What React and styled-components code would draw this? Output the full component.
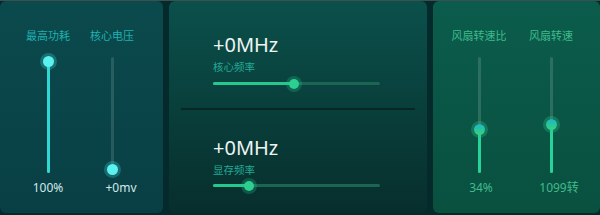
import React from 'react'
import styled, { createGlobalStyle } from 'styled-components'

const GlobalStyle = createGlobalStyle`
  html, body {
    margin: 0;
    padding: 0;
    background: #052a2c;
  }
  body {
    font-family: "Noto Sans", "Noto Sans CJK SC", sans-serif;
  }
`

// THEME PER PANEL
const themes = {
  power: {
    bg: 'linear-gradient(180deg, #0b4a4c 0%, #083f45 100%)',
    label: '#1fb0b2',
    value: '#d2e8e8',
    track: 'rgba(255,255,255,0.13)',
    fill: '#2fd8d2',
    thumb: '#5af2ee',
    halo: 'rgba(60, 220, 220, 0.28)',
  },
  fan: {
    bg: 'linear-gradient(180deg, #0b5c4c 0%, #09503f 100%)',
    label: '#3fbb8c',
    value: '#3fbb8c',
    track: 'rgba(255,255,255,0.14)',
    fill: '#28d39a',
    thumb: 'linear-gradient(180deg, #1fb4c4 0%, #34d47e 100%)',
    halo: 'rgba(50, 200, 140, 0.3)',
  },
}

const VerticalSlider = ({ value, theme }) => {
  // thumb center moves between top+4 and bottom-4
  const top = 4 + (1 - value) * 108
  return (
    <Track $theme={theme}>
      <Fill $theme={theme} style={{ top: top }} />
      <VThumb $theme={theme} style={{ top: top }} />
    </Track>
  )
}

const HorizontalSlider = ({ value, gap }) => {
  const left = value * 167
  return (
    <HTrack $gap={gap}>
      <HFill style={{ width: left }} />
      <HThumb style={{ left: left }} />
    </HTrack>
  )
}

const App = () => {
  return (
    <>
      <GlobalStyle />
      <Page>
        <Panel $bg={themes.power.bg}>
          <Columns $pad='16px' $col='64px'>
            <Column>
              <Label $color={themes.power.label}>最高功耗</Label>
              <VerticalSlider value={1} theme={themes.power} />
              <Value $color={themes.power.value}>100%</Value>
            </Column>
            <Column>
              <Label $color={themes.power.label}>核心电压</Label>
              <VerticalSlider value={0} theme={themes.power} />
              <Value $color={themes.power.value} $shift='18px'>+0mv</Value>
            </Column>
          </Columns>
        </Panel>

        <Panel $bg='linear-gradient(180deg, #0b504b 0%, #072e2c 100%)'>
          <ClockSection>
            <Mhz>+0MHz</Mhz>
            <SmallLabel>核心频率</SmallLabel>
            <HorizontalSlider value={0.485} gap='8px' />
          </ClockSection>
          <Divider />
          <ClockSection $second>
            <Mhz>+0MHz</Mhz>
            <SmallLabel>显存频率</SmallLabel>
            <HorizontalSlider value={0.215} gap='7px' />
          </ClockSection>
        </Panel>

        <Panel $bg={themes.fan.bg}>
          <Columns $pad='10px' $col='72px'>
            <Column>
              <Label $color={themes.fan.label}>风扇转速比</Label>
              <VerticalSlider value={0.37} theme={themes.fan} />
              <Value $color={themes.fan.value} $shift='4px'>34%</Value>
            </Column>
            <Column>
              <Label $color={themes.fan.label}>风扇转速</Label>
              <VerticalSlider value={0.41} theme={themes.fan} />
              <Value $color={themes.fan.value} $shift='16px'>1099转</Value>
            </Column>
          </Columns>
        </Panel>
      </Page>
    </>
  )
}

const Page = styled.div`
  display: grid;
  grid-template-columns: 163px 258px 1fr;
  column-gap: 6px;
  width: 600px;
  height: 214px;
  border-top: 1px solid #3d5050;
  background: #052a2c;
`

const Panel = styled.div`
  background: ${p => p.$bg};
  border-radius: 6px;
  height: 212px;
  display: flex;
  flex-direction: column;
  overflow: hidden;
`

const Columns = styled.div`
  display: grid;
  grid-template-columns: ${p => p.$col} ${p => p.$col};
  padding-left: ${p => p.$pad};
  padding-top: 26px;
`

const Column = styled.div`
  display: flex;
  flex-direction: column;
  align-items: center;
`

const Label = styled.div`
  font-family: "Noto Sans CJK SC", sans-serif;
  font-size: 11px;
  line-height: 16px;
  color: ${p => p.$color};
  white-space: nowrap;
`

const Value = styled.div`
  font-family: "Noto Sans", "Noto Sans CJK SC", sans-serif;
  font-size: 12px;
  line-height: 16px;
  margin-top: 7px;
  margin-left: ${p => p.$shift || '0'};
  color: ${p => p.$color};
  white-space: nowrap;
`

const Track = styled.div`
  position: relative;
  width: 3px;
  height: 116px;
  margin-top: 14px;
  border-radius: 2px;
  background: ${p => p.$theme.track};
`

const Fill = styled.div`
  position: absolute;
  left: 0;
  right: 0;
  bottom: 0;
  border-radius: 2px;
  background: ${p => p.$theme.fill};
`

const VThumb = styled.div`
  position: absolute;
  left: 50%;
  width: 11px;
  height: 11px;
  margin: -5.5px 0 0 -5.5px;
  border-radius: 50%;
  background: ${p => p.$theme.thumb};
  box-shadow: 0 0 0 3px ${p => p.$theme.halo};
`

const ClockSection = styled.div`
  height: ${p => (p.$second ? '103px' : '107px')};
  box-sizing: border-box;
  padding: ${p => (p.$second ? '28px' : '34px')} 0 0 44px;
`

const Mhz = styled.div`
  font-family: "Noto Sans", sans-serif;
  font-size: 20px;
  line-height: 20px;
  color: #eef4f2;
`

const SmallLabel = styled.div`
  font-family: "Noto Sans CJK SC", sans-serif;
  font-size: 10.5px;
  line-height: 15px;
  margin-top: 4px;
  color: #23a896;
`

const HTrack = styled.div`
  position: relative;
  width: 167px;
  height: 3px;
  margin-top: ${p => p.$gap};
  border-radius: 2px;
  background: #1a6652;
`

const HFill = styled.div`
  position: absolute;
  left: 0;
  top: 0;
  bottom: 0;
  border-radius: 2px;
  background: #25c98f;
`

const HThumb = styled.div`
  position: absolute;
  top: 50%;
  width: 10px;
  height: 10px;
  margin: -5px 0 0 -5px;
  border-radius: 50%;
  background: #2bcf8f;
  box-shadow: 0 0 0 3px rgba(40, 200, 140, 0.25);
`

const Divider = styled.div`
  height: 2px;
  margin: 0 12px;
  background: #082624;
`

export default App
